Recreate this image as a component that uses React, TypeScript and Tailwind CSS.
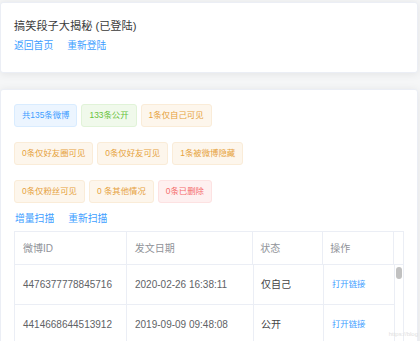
import React from "react";

const FONT = { fontFamily: '"Liberation Sans", "Noto Sans CJK SC", sans-serif' };

type TagKind = "blue" | "green" | "orange" | "red";

const TAG_CLASS: Record<TagKind, string> = {
  blue: "bg-[#ecf5ff] border-[#d9ecff] text-[#409eff]",
  green: "bg-[#f0f9eb] border-[#e1f3d8] text-[#67c23a]",
  orange: "bg-[#fdf6ec] border-[#faecd8] text-[#e6a23c]",
  red: "bg-[#fef0f0] border-[#fde2e2] text-[#f56c6c]",
};

const TAG_ROWS: { text: string; kind: TagKind }[][] = [
  [
    { text: "共135条微博", kind: "blue" },
    { text: "133条公开", kind: "green" },
    { text: "1条仅自己可见", kind: "orange" },
  ],
  [
    { text: "0条仅好友圈可见", kind: "orange" },
    { text: "0条仅好友可见", kind: "orange" },
    { text: "1条被微博隐藏", kind: "orange" },
  ],
  [
    { text: "0条仅粉丝可见", kind: "orange" },
    { text: "0 条其他情况", kind: "orange" },
    { text: "0条已删除", kind: "red" },
  ],
];

const ROWS = [
  { id: "4476377778845716", date: "2020-02-26 16:38:11", status: "仅自己" },
  { id: "4414668644513912", date: "2019-09-09 09:48:08", status: "公开" },
];

function Tag({ text, kind }: { text: string; kind: TagKind }) {
  return (
    <span
      className={`h-[23px] px-[7px] flex items-center border rounded-[3px] text-[8.4px] whitespace-nowrap ${TAG_CLASS[kind]}`}
    >
      {text}
    </span>
  );
}

export default function App() {
  return (
    <div style={FONT} className="relative h-[341px] overflow-hidden bg-[#f5f6f7] pt-[2px]">
      {/* Header card */}
      <div className="w-[418px] h-[71px] bg-white rounded-[3px] border border-[#ebeef5] shadow-[0_1px_8px_0_rgba(0,0,0,0.08)] px-[13px] pt-[15px]">
        <div className="text-[11.2px] leading-[16px] text-[#3a3a3a]">搞笑段子大揭秘 (已登陆)</div>
        <div className="mt-[5px] flex gap-[14px] text-[9.8px] leading-[14px] text-[#409eff]">
          <span>返回首页</span>
          <span>重新登陆</span>
        </div>
      </div>

      {/* Stats card */}
      <div className="mt-[16px] w-[418px] h-[300px] bg-white rounded-[3px] border border-[#ebeef5] shadow-[0_1px_8px_0_rgba(0,0,0,0.08)] px-[13px] pt-[14px]">
        <div className="flex flex-col gap-[15px]">
          {TAG_ROWS.map((row, i) => (
            <div key={i} className="flex gap-[4px]">
              {row.map((t) => (
                <Tag key={t.text} text={t.text} kind={t.kind} />
              ))}
            </div>
          ))}
        </div>

        <div className="mt-[9px] flex gap-[14px] text-[9.8px] leading-[14px] text-[#409eff] pl-[1px]">
          <span>增量扫描</span>
          <span>重新扫描</span>
        </div>

        {/* Table */}
        <div className="mt-[5px] w-[390px] border-t border-l border-[#ebeef5] text-[10px]">
          <div className="flex h-[33px] border-b border-[#ebeef5] text-[#909399]">
            <div className="w-[112px] flex items-center px-[8px] border-r border-[#ebeef5]">微博ID</div>
            <div className="w-[127px] flex items-center px-[8px] border-r border-[#ebeef5]">发文日期</div>
            <div className="w-[70px] flex items-center px-[7px] border-r border-[#ebeef5]">状态</div>
            <div className="w-[71px] flex items-center px-[7px] border-r border-[#ebeef5]">操作</div>
            <div className="w-[10px] border-r border-[#ebeef5]" />
          </div>
          <div className="flex">
            <div className="flex-1">
              {ROWS.map((r) => (
                <div key={r.id} className="flex h-[40px] border-b border-[#ebeef5] text-[#606266]">
                  <div className="w-[112px] flex items-center px-[8px] border-r border-[#ebeef5]">{r.id}</div>
                  <div className="w-[127px] flex items-center px-[8px] border-r border-[#ebeef5] whitespace-nowrap">{r.date}</div>
                  <div className="w-[70px] flex items-center px-[7px] border-r border-[#ebeef5] text-[#444]">{r.status}</div>
                  <div className="w-[71px] flex items-center px-[8px] border-r border-[#ebeef5] text-[8.4px] text-[#409eff]">打开链接</div>
                </div>
              ))}
            </div>
            <div className="w-[10px] h-[80px] pt-[2px] flex justify-center border-r border-[#ebeef5]">
              <div className="w-[6px] h-[12px] rounded-full bg-[#c1c1c1]" />
            </div>
          </div>
        </div>
      </div>

      <div className="absolute right-[2px] bottom-[2px] text-[6px] text-[#e0e0e0]">https://blog</div>
    </div>
  );
}
